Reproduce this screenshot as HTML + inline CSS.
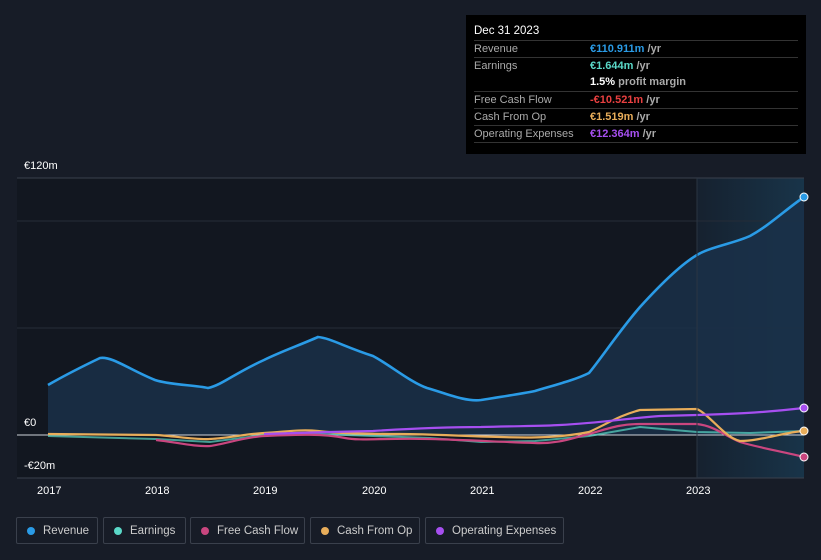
<!DOCTYPE html>
<html><head><style>
body{margin:0;width:821px;height:560px;background:#171c27;font-family:"Liberation Sans",sans-serif;overflow:hidden;position:relative}
.tt{position:absolute;left:466px;top:15px;width:340px;height:139px;background:#000;color:#aaa;font-size:11px}
.tt .h{color:#fff;font-size:11.5px;padding:10px 0 0 8px;height:21px}
.row{position:absolute;left:8px;width:324px;height:17px;border-top:1px solid #333;line-height:17px}
.row span{position:absolute;left:116px;font-weight:bold}
.lg{position:absolute;top:517px;height:27px;border:1px solid #3a404c;border-radius:2px;color:#ccc;font-size:11.5px;line-height:27px;box-sizing:border-box}
.lg i{position:absolute;left:10px;top:9px;width:8px;height:8px;border-radius:50%}
.lg b{font-weight:normal;position:absolute;left:26px}
.ax{position:absolute;color:#fff;font-size:11px}
</style></head><body>
<svg width="821" height="560" style="position:absolute;left:0;top:0">
<defs><linearGradient id="fg" x1="0" x2="1"><stop offset="0" stop-color="#16212f"/><stop offset="1" stop-color="#183449"/></linearGradient></defs>
<rect x="17" y="178" width="680" height="300" fill="#121720"/>
<rect x="697" y="178" width="107" height="300" fill="url(#fg)"/>
<line x1="17" y1="178" x2="804" y2="178" stroke="#3a404c"/>
<line x1="17" y1="221" x2="804" y2="221" stroke="#262c37"/>
<line x1="17" y1="328" x2="804" y2="328" stroke="#262c37"/>
<path d="M48,385 C60,378 75,370 100,358 C112,356 130,370 155,380 C170,385 195,385 208,388 C222,385 235,373 264,360 C280,352 300,345 318,337 C330,338 345,347 373,356 C390,365 410,382 427,388 C445,393 465,402 481,400 C500,397 520,394 535,391 C555,385 575,380 589,373 C600,360 620,330 640,307 C660,285 680,265 697,255 C710,247 735,243 750,236 C770,225 785,210 804,197 L804,435 L48,435Z" fill="#1a3049" opacity="0.85"/>
<line x1="17" y1="435" x2="804" y2="435" stroke="#cfd3da" stroke-width="1"/>
<line x1="17" y1="478" x2="804" y2="478" stroke="#3a404c"/>
<path d="M48,436 L156,439 L210,442 L264,435 L320,434 L373,436 L430,438 L481,442 L535,441 L589,436 L640,427 L697,432 L750,433 L804,431" fill="none" stroke="#5ad8c8" stroke-width="2" opacity="0.7"/>
<path d="M156,440 C175,442 195,447 210,446 C225,444 245,437 264,436 C290,435 320,433 345,438 C360,441 380,438 430,439 C470,440 500,442 535,443 C560,444 575,437 589,434 C610,428 620,424 640,424 L697,424 C715,426 725,436 740,442 C760,448 785,452 804,457" fill="none" stroke="#c9467f" stroke-width="2.2"/>
<path d="M48,434 L156,435 C175,436 195,440 210,439 C230,438 245,434 264,433 C285,432 300,429 318,431 C335,433 360,434 400,434 C430,434 460,436 500,437 C530,438 560,438 589,432 C605,425 620,415 640,410 L697,409 C710,415 725,438 740,441 C760,441 785,432 804,431" fill="none" stroke="#e8ad5a" stroke-width="2.2"/>
<path d="M264,434 L330,432 L373,431 C420,428 450,427 481,427 C520,426 545,426 560,425 C600,423 630,418 660,416 L697,415 C730,414 760,413 804,408" fill="none" stroke="#a64ff0" stroke-width="2.2"/>
<path d="M48,385 C60,378 75,370 100,358 C112,356 130,370 155,380 C170,385 195,385 208,388 C222,385 235,373 264,360 C280,352 300,345 318,337 C330,338 345,347 373,356 C390,365 410,382 427,388 C445,393 465,402 481,400 C500,397 520,394 535,391 C555,385 575,380 589,373 C600,360 620,330 640,307 C660,285 680,265 697,255 C710,247 735,243 750,236 C770,225 785,210 804,197" fill="none" stroke="#2a9be6" stroke-width="2.6"/>
<line x1="697" y1="178" x2="697" y2="478" stroke="#2a3542"/>
<circle cx="804" cy="197" r="4" fill="#2a9be6" stroke="#fff" stroke-width="1"/>
<circle cx="804" cy="408" r="4" fill="#a64ff0" stroke="#fff" stroke-width="1"/>
<circle cx="804" cy="431" r="4" fill="#e8ad5a" stroke="#fff" stroke-width="1"/>
<circle cx="804" cy="457" r="4" fill="#c9467f" stroke="#fff" stroke-width="1"/>
</svg>
<div class="ax" style="left:24px;top:160px">€120m</div>
<div class="ax" style="left:24px;top:417px">€0</div>
<div class="ax" style="left:24px;top:460px">-€20m</div>
<div class="ax" style="left:37px;top:485px">2017</div>
<div class="ax" style="left:145px;top:485px">2018</div>
<div class="ax" style="left:253px;top:485px">2019</div>
<div class="ax" style="left:362px;top:485px">2020</div>
<div class="ax" style="left:470px;top:485px">2021</div>
<div class="ax" style="left:578px;top:485px">2022</div>
<div class="ax" style="left:686px;top:485px">2023</div>
<div class="tt"><div class="h">Dec 31 2023</div>
<div class="row" style="top:25px">Revenue<span style="color:#2a9be6">€110.911m <b style="color:#aaa">/yr</b></span></div>
<div class="row" style="top:42px">Earnings<span style="color:#5ad8c8">€1.644m <b style="color:#aaa">/yr</b></span></div>
<div class="row" style="top:59px;border:0"><span style="color:#fff">1.5% <b style="color:#aaa">profit margin</b></span></div>
<div class="row" style="top:76px">Free Cash Flow<span style="color:#e84040">-€10.521m <b style="color:#aaa">/yr</b></span></div>
<div class="row" style="top:93px">Cash From Op<span style="color:#e8ad5a">€1.519m <b style="color:#aaa">/yr</b></span></div>
<div class="row" style="top:110px">Operating Expenses<span style="color:#a64ff0">€12.364m <b style="color:#aaa">/yr</b></span></div>
<div class="row" style="top:127px;height:0"></div>
</div>
<div class="lg" style="left:16px;width:82px"><i style="background:#2a9be6"></i><b>Revenue</b></div>
<div class="lg" style="left:103px;width:83px"><i style="background:#5ad8c8"></i><b>Earnings</b></div>
<div class="lg" style="left:190px;width:115px"><i style="background:#c9467f"></i><b>Free Cash Flow</b></div>
<div class="lg" style="left:310px;width:110px"><i style="background:#e8ad5a"></i><b>Cash From Op</b></div>
<div class="lg" style="left:425px;width:139px"><i style="background:#a64ff0"></i><b>Operating Expenses</b></div>
</body></html>
